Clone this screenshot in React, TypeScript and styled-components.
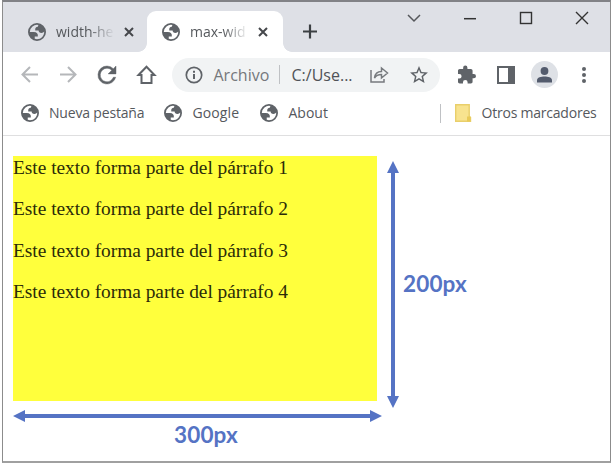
import React from "react";
import styled, { createGlobalStyle } from "styled-components";

const ink = "#5f6368";
const blue = "#5573c4";

const GlobalStyle = createGlobalStyle`
  html, body, #root { height: 100%; margin: 0; }
  body { background: #fff; overflow: hidden; }
  * { box-sizing: border-box; }
`;

const Window = styled.main`
  height: 463px;
  width: 609px;
  margin-left: 2px;
  border: 1px solid #8c8c8c;
  border-top: 2px solid #818286;
  border-bottom: 2px solid #a0a0a0;
  display: flex;
  flex-direction: column;
  background: #fff;
  font-family: "Open Sans", "Noto Sans", sans-serif;
`;

const TabStrip = styled.header`
  height: 50px;
  display: flex;
  background: #dee0e6;
`;

const Tab = styled.div<{ $active?: boolean }>`
  position: relative;
  width: ${(p) => (p.$active ? 136 : 144)}px;
  height: ${(p) => (p.$active ? 41 : 50)}px;
  margin-top: ${(p) => (p.$active ? 9 : 0)}px;
  padding: ${(p) => (p.$active ? "0 0 0 15px" : "9px 0 0 25px")};
  display: flex;
  align-items: center;
  background: ${(p) => (p.$active ? "#fff" : "transparent")};
  border-radius: 9px 9px 0 0;
  ${(p) =>
    p.$active &&
    `&::before, &::after {
      content: "";
      position: absolute;
      bottom: 0;
      width: 9px;
      height: 9px;
    }
    &::before { right: 100%; background: radial-gradient(circle at 0 0, #dee0e6 8.5px, #fff 9.2px); }
    &::after { left: 100%; background: radial-gradient(circle at 100% 0, #dee0e6 8.5px, #fff 9.2px); }`}
`;

const TabTitle = styled.span`
  width: 60px;
  margin-left: 10px;
  font-size: 14px;
  line-height: 22px;
  color: #55585c;
  white-space: nowrap;
  mask-image: linear-gradient(to right, #000 55%, transparent 98%);
`;

const Glyph = styled.svg<{ $ml?: number }>`
  flex: none;
  display: block;
  overflow: visible;
  margin-left: ${(p) => p.$ml ?? 0}px;
`;

const WindowControls = styled.div`
  margin-left: auto;
  padding: 9px 21px 0 0;
  display: flex;
  gap: 42px;
`;

const Toolbar = styled.nav`
  height: 45px;
  display: flex;
  align-items: center;
  padding-left: 18px;
`;

const AddressBar = styled.div`
  width: 268px;
  height: 34px;
  margin-left: 16px;
  padding-left: 13px;
  border-radius: 17px;
  background: #f1f3f4;
  display: flex;
  align-items: center;
`;

const Text = styled.span<{ $w: number; $size?: number; $spacing?: number; $ml?: number; $color?: string }>`
  flex: none;
  width: ${(p) => p.$w}px;
  margin-left: ${(p) => p.$ml ?? 0}px;
  font-size: ${(p) => p.$size ?? 14}px;
  line-height: 22px;
  letter-spacing: ${(p) => p.$spacing ?? 0}px;
  color: ${(p) => p.$color ?? "#55585d"};
  white-space: nowrap;
`;

const Divider = styled.i<{ $ml: number }>`
  flex: none;
  width: 1px;
  height: 19px;
  margin-left: ${(p) => p.$ml}px;
  background: #bfc1c4;
`;

const Avatar = styled.div`
  width: 27px;
  height: 27px;
  margin-left: 16px;
  border-radius: 50%;
  background: #dee1e6;
  display: grid;
  place-items: center;
`;

const Bookmarks = styled.nav`
  height: 39px;
  padding: 0 0 6px 18px;
  display: flex;
  align-items: center;
  border-bottom: 1px solid #dfdfe0;
`;

const Page = styled.section`
  padding: 20px 0 0 10px;
  display: grid;
  grid-template-columns: 364px 1fr;
  grid-template-rows: 245px 1fr;
`;

const YellowBox = styled.div`
  padding-top: 1px;
  background: #ffff3c;
  display: flex;
  flex-direction: column;
  gap: 19.4px;
`;

const Paragraph = styled.p`
  margin: 0;
  color: #2b2b08;
  font: 19.4px/22px "Liberation Serif", serif;
  letter-spacing: -0.02px;
  white-space: nowrap;
`;

const HeightMeasure = styled.div`
  display: flex;
  align-items: flex-start;
  padding: 5px 0 0 10px;
`;

const WidthMeasure = styled.div`
  padding-top: 9px;
`;

const Measure = styled.span<{ $top?: number; $left: number }>`
  display: block;
  margin: ${(p) => p.$top ?? 0}px 0 0 ${(p) => p.$left}px;
  color: ${blue};
  font: bold 22.5px/26px Lato, sans-serif;
  letter-spacing: 0.15px;
`;

const Globe = ({ ml }: { ml?: number }) => (
  <Glyph $ml={ml} width="18" height="18" viewBox="2 2 20 20" fill={ink} fillRule="evenodd">
    <path d="M12 2a10 10 0 1 0 0 20 10 10 0 0 0 0-20zM4 12h4.400c3.407.022 4.922 1.730 4.543 5.127H9.488v2.470a8.004 8.004 0 0 0 10.498-8.083C19.327 12.504 18.332 13 17 13c-2.137 0-3.206-.916-3.206-2.750h-3.748c-.274-2.728.683-4.092 2.870-4.092 0-.975.327-1.597.811-1.970A8.004 8.004 0 0 0 4 12z" />
  </Glyph>
);

const TabClose = () => (
  <Glyph $ml={7.5} width="10" height="10" stroke="#45474b" strokeWidth="2">
    <path d="M1 1l8 8M9 1L1 9" />
  </Glyph>
);

const paragraphs = [1, 2, 3, 4];

export default function App() {
  return (
    <>
      <GlobalStyle />
      <Window>
        <TabStrip>
          <Tab>
            <Globe />
            <TabTitle>width-he</TabTitle>
            <TabClose />
          </Tab>
          <Tab $active>
            <Globe />
            <TabTitle>max-wid</TabTitle>
            <TabClose />
          </Tab>
          <Glyph $ml={19.5} width="14" height="58" stroke="#3c4043" strokeWidth="2.200"><path d="M0 29.500h14M7 22.500v14" /></Glyph>
          <WindowControls>
            <Glyph width="14" height="14" fill="none" stroke="#55575b" strokeWidth="1.500"><path d="M1 4l6 6 6-6" /></Glyph>
            <Glyph width="14" height="14" stroke="#333" strokeWidth="1.500"><path d="M1 7.700h12" /></Glyph>
            <Glyph width="14" height="14" fill="none" stroke="#333" strokeWidth="1.400"><rect x="1.500" y="1.500" width="11" height="11" /></Glyph>
            <Glyph width="14" height="14" stroke="#333" strokeWidth="1.400"><path d="M1 1l12 12M13 1L1 13" /></Glyph>
          </WindowControls>
        </TabStrip>
        <Toolbar>
          <Glyph width="17" height="17" fill="none" stroke="#b5b7ba" strokeWidth="2"><path d="M17 8.500H1.500M9 1L1.500 8.500 9 16" /></Glyph>
          <Glyph $ml={22} width="17" height="17" fill="none" stroke="#b5b7ba" strokeWidth="2"><path d="M0 8.500h15.500M8 1l7.500 7.500L8 16" /></Glyph>
          <Glyph $ml={21} width="18" height="18" viewBox="4 4 16 16" fill={ink} stroke={ink} strokeWidth=".4">
            <path d="M17.650 6.350A7.958 7.958 0 0 0 12 4a8 8 0 1 0 7.730 10h-2.080A6 6 0 1 1 12 6c1.660 0 3.140.690 4.220 1.780L13 11h7V4z" />
          </Glyph>
          <Glyph $ml={20.500} width="19" height="19" fill="none" stroke={ink} strokeWidth="2"><path d="M1.500 10L9.500 1.700 17.500 10h-3V18h-10v-8z" /></Glyph>
          <AddressBar>
            <Glyph $ml={0.500} width="18" height="18" fill="none" stroke={ink} strokeWidth="1.700"><circle cx="9" cy="9" r="7.700" /><path d="M9 8v5M9 4.700v2" strokeWidth="2" /></Glyph>
            <Text $w={57} $ml={10.5} $size={16} $color="#75787c">Archivo</Text>
            <Divider $ml={8.5} />
            <Text $w={62} $ml={11.5} $size={16} $color="#4f5257">C:/Use...</Text>
            <Glyph $ml={16} width="19" height="17" fill="none" stroke="#777a7e" strokeWidth="1.500">
              <path d="M1 4v12h13v-3M4.500 12C5 8 7 5.500 11.500 5.500V2l6 5-6 5V8.500C8.500 8.500 6 9.500 4.500 12z" />
            </Glyph>
            <Glyph $ml={21} width="18" height="17" viewBox="2 2 20 19" fill={ink}>
              <path d="M22 9.240l-7.190-.620L12 2 9.190 8.630 2 9.240l5.460 4.730L5.820 21 12 17.270 18.180 21l-1.630-7.030L22 9.240zM12 15.400l-3.760 2.270 1-4.280-3.320-2.880 4.380-.380L12 6.100l1.710 4.040 4.380.380-3.320 2.880 1 4.280L12 15.400z" />
            </Glyph>
          </AddressBar>
          <Glyph $ml={18} width="18" height="19" viewBox="2 1 21 21" fill={ink}>
            <path d="M20.500 11H19V7c0-1.100-.900-2-2-2h-4V3.500a2.500 2.500 0 0 0-5 0V5H4c-1.100 0-2 .900-2 2v3.800h1.500a2.700 2.700 0 0 1 0 5.400H2V20c0 1.100.900 2 2 2h3.800v-1.500a2.700 2.700 0 0 1 5.400 0V22H17c1.100 0 2-.900 2-2v-4h1.500a2.500 2.500 0 0 0 0-5z" />
          </Glyph>
          <Glyph $ml={21.5} width="18" height="18" fill="none" stroke={ink} strokeWidth="2"><rect x="1" y="1" width="16" height="16" /><path d="M11 1h6v16h-6z" fill={ink} stroke="none" /></Glyph>
          <Avatar>
            <Glyph width="15" height="16" fill="#535b6d"><circle cx="7.500" cy="4" r="3.900" /><path d="M0 15.500v-2.200C0 10.500 4 9.500 7.500 9.500s7.500 1 7.500 3.800v2.200z" /></Glyph>
          </Avatar>
          <Glyph $ml={24} width="4" height="16" fill={ink}><circle cx="2" cy="2" r="2" /><circle cx="2" cy="8" r="2" /><circle cx="2" cy="14" r="2" /></Glyph>
        </Toolbar>
        <Bookmarks>
          <Globe />
          <Text $w={95.5} $ml={10} $spacing={-0.18}>Nueva pestaña</Text>
          <Globe ml={19.5} />
          <Text $w={48} $ml={10.5} $spacing={0.1}>Google</Text>
          <Globe ml={19.5} />
          <Text $w={40} $ml={10.5}>About</Text>
          <Divider $ml={111} />
          <Glyph $ml={14} width="16" height="18"><path d="M.700.700h13.500v12l1.300.800v3.800H.700z" fill="#f8e38f" stroke="#e9cf6b" strokeWidth="1.400" /><path d="M12 12.500h3.500v5H12z" fill="#e9ca58" /></Glyph>
          <Text $w={116} $ml={11} $spacing={-0.22}>Otros marcadores</Text>
        </Bookmarks>
        <Page>
          <YellowBox>{paragraphs.map((n) => <Paragraph key={n}>Este texto forma parte del párrafo {n}</Paragraph>)}</YellowBox>
          <HeightMeasure>
            <Glyph width="12" height="247" fill={blue}><path d="M6 0l6 12H8v223h4l-6 12-6-12h4V12H0z" /></Glyph>
            <Measure $top={110} $left={4}>200px</Measure>
          </HeightMeasure>
          <WidthMeasure>
            <Glyph width="369" height="12" fill={blue}><path d="M0 6L12 0v4h345V0l12 6-12 6V8H12v4z" /></Glyph>
            <Measure $left={161}>300px</Measure>
          </WidthMeasure>
        </Page>
      </Window>
    </>
  );
}
